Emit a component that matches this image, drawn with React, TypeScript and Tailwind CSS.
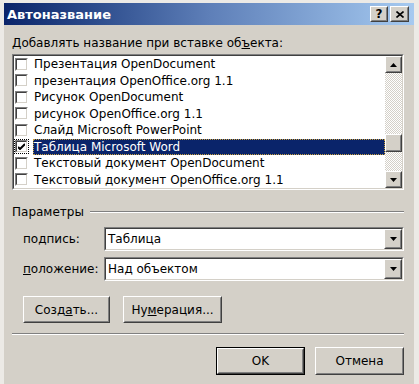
import React from "react";

const font = { fontFamily: '"DejaVu Sans", Verdana, sans-serif' };

function Raised({ className = "", children }: { className?: string; children?: React.ReactNode }) {
  return (
    <div className={"border border-t-white border-l-white border-r-[#404040] border-b-[#404040] " + className}>
      <div className="w-full h-full border border-t-[#d4d0c8] border-l-[#d4d0c8] border-r-[#808080] border-b-[#808080] flex items-center justify-center bg-[#d4d0c8]">
        {children}
      </div>
    </div>
  );
}

function Arrow({ up }: { up?: boolean }) {
  return (
    <svg width="7" height="4" viewBox="0 0 7 4">
      {up ? <polygon points="0,4 7,4 3.5,0" fill="#000" /> : <polygon points="0,0 7,0 3.5,4" fill="#000" />}
    </svg>
  );
}

function Check({ checked }: { checked?: boolean }) {
  return (
    <div className="w-[13px] h-[13px] border border-t-[#808080] border-l-[#808080] border-r-white border-b-white shrink-0">
      <div className="w-full h-full border border-t-[#404040] border-l-[#404040] border-r-[#d4d0c8] border-b-[#d4d0c8] bg-white flex items-center justify-center">
        {checked && (
          <svg width="7" height="7" viewBox="0 0 7 7">
            <path d="M0 2 L2 4 L7 -1" stroke="#000" strokeWidth="2" fill="none" transform="translate(0,2)" />
          </svg>
        )}
      </div>
    </div>
  );
}

const items = [
  "Презентация OpenDocument",
  "презентация OpenOffice.org 1.1",
  "Рисунок OpenDocument",
  "рисунок OpenOffice.org 1.1",
  "Слайд Microsoft PowerPoint",
  "Таблица Microsoft Word",
  "Текстовый документ OpenDocument",
  "Текстовый документ OpenOffice.org 1.1",
];

function Combo({ value }: { value: string }) {
  return (
    <div className="flex-1 h-[24px] border border-t-[#808080] border-l-[#808080] border-r-white border-b-white">
      <div className="w-full h-full border border-t-[#404040] border-l-[#404040] border-r-[#d4d0c8] border-b-[#d4d0c8] bg-white flex items-center">
        <span className="flex-1 pl-[2px] text-[12px] text-black leading-none">{value}</span>
        <Raised className="w-[18px] h-[20px]">
          <Arrow />
        </Raised>
      </div>
    </div>
  );
}

function Btn({ children, className = "", def }: { children: React.ReactNode; className?: string; def?: boolean }) {
  const inner = (
    <Raised className="w-full h-full">
      <span className="text-[12px] text-black leading-none">{children}</span>
    </Raised>
  );
  return def ? (
    <div className={"border border-black " + className}>{inner}</div>
  ) : (
    <div className={className}>{inner}</div>
  );
}

export default function App() {
  return (
    <div className="w-[419px] h-[384px] bg-[#eceae6] pt-[3px] pl-[4px] pr-[5px] overflow-hidden" style={font}>
      <div className="h-[381px] bg-[#d4d0c8] flex flex-col">
        <div className="h-[22px] bg-gradient-to-r from-[#0a246a] via-[#5e7fb8] to-[#a6caf0] flex items-center pl-[3px] pr-[5px]">
          <span className="text-white font-bold text-[13px] flex-1 leading-none">Автоназвание</span>
          <Raised className="w-[18px] h-[16px] mr-[2px]">
            <span className="text-[12px] font-bold leading-none text-black">?</span>
          </Raised>
          <Raised className="w-[19px] h-[16px]">
            <svg width="8" height="7" viewBox="0 0 8 7">
              <path d="M0.5 0.5 L7.5 6.5 M7.5 0.5 L0.5 6.5" stroke="#000" strokeWidth="1.6" />
            </svg>
          </Raised>
        </div>

        <div className="pl-[8px] pr-[10px] flex flex-col">
          <div className="mt-[12px] h-[17px] text-[12px] text-black leading-none">
            Добавлять название при вставке об<u>ъ</u>екта:
          </div>

          <div className="h-[136px] border border-t-[#808080] border-l-[#808080] border-r-white border-b-white">
            <div className="w-full h-full border border-t-[#404040] border-l-[#404040] border-r-[#d4d0c8] border-b-[#d4d0c8] bg-white flex">
              <div className="flex-1 flex flex-col">
                {items.map((t, i) => {
                  const sel = i === 5;
                  return (
                    <div key={t} className="h-[16.5px] flex items-center pl-[1px]">
                      <div className={sel ? "outline outline-1 outline-dotted outline-[#000] flex" : "flex"}>
                        <Check checked={sel} />
                      </div>
                      <span
                        className={
                          "ml-[5px] flex-1 h-full flex items-center pl-[1px] text-[12px] leading-none whitespace-nowrap " +
                          (sel ? "bg-[#0a246a] text-white outline outline-1 outline-dotted outline-[#c8a040] -outline-offset-1" : "text-black")
                        }
                      >
                        {t}
                      </span>
                    </div>
                  );
                })}
              </div>
              <div className="w-[17px] flex flex-col bg-[repeating-conic-gradient(#d4d0c8_0_25%,#ffffff_0_50%)] bg-[length:2px_2px]">
                <Raised className="w-[17px] h-[17px]">
                  <Arrow up />
                </Raised>
                <div className="h-[61px]" />
                <Raised className="w-[17px] h-[18px]" />
                <div className="flex-1" />
                <Raised className="w-[17px] h-[17px]">
                  <Arrow />
                </Raised>
              </div>
            </div>
          </div>

          <div className="mt-[15px] flex items-center h-[14px]">
            <span className="text-[12px] text-black leading-none mr-[6px]">Параметры</span>
            <div className="flex-1 flex flex-col">
              <div className="h-px bg-[#808080]" />
              <div className="h-px bg-white" />
            </div>
          </div>

          <div className="mt-[8px] flex items-center pl-[11px]">
            <span className="w-[81px] text-[12px] text-black leading-none">
              по<u>д</u>пись:
            </span>
            <Combo value="Таблица" />
          </div>
          <div className="mt-[6px] flex items-center pl-[11px]">
            <span className="w-[81px] text-[12px] text-black leading-none">
              <u>п</u>оложение:
            </span>
            <Combo value="Над объектом" />
          </div>

          <div className="mt-[15px] flex pl-[11px] gap-[13px]">
            <Btn className="w-[87px] h-[27px]">
              Созд<u>а</u>ть...
            </Btn>
            <Btn className="w-[99px] h-[27px]">
              Ну<u>м</u>ерация...
            </Btn>
          </div>

          <div className="mt-[10px] flex flex-col">
            <div className="h-px bg-[#808080]" />
            <div className="h-px bg-white" />
          </div>

          <div className="mt-[12px] flex justify-end gap-[10px]">
            <Btn def className="w-[89px] h-[28px]">
              OK
            </Btn>
            <Btn className="w-[89px] h-[28px]">Отмена</Btn>
          </div>
        </div>
      </div>
    </div>
  );
}
